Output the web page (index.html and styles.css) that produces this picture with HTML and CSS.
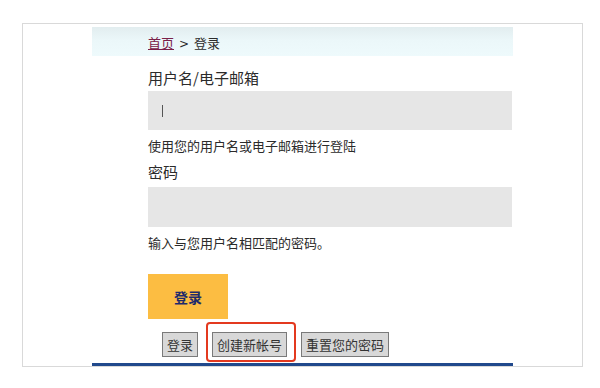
FILE: index.html
```html
<!DOCTYPE html>
<html lang="zh-CN">
<head>
    <meta charset="UTF-8">
    <meta name="viewport" content="width=device-width, initial-scale=1.0">
    <title>登录</title>
    <link rel="stylesheet" href="styles.css">
</head>
<body>
    <div class="frame">
        <div class="page">
            <!-- 面包屑 -->
            <div class="breadcrumb">
                <a href="#" class="crumb-link">首页</a><span class="crumb-sep">&gt;</span>登录
            </div>

            <div class="form">
                <label class="field-label">用户名/电子邮箱</label>
                <div class="field"><span class="caret"></span></div>
                <p class="help">使用您的用户名或电子邮箱进行登陆</p>

                <label class="field-label label-pass">密码</label>
                <div class="field field-pass"></div>
                <p class="help">输入与您用户名相匹配的密码。</p>

                <button class="submit-btn">登录</button>

                <div class="tabs">
                    <button class="tab-btn">登录</button>
                    <button class="tab-btn tab-marked">创建新帐号</button>
                    <button class="tab-btn">重置您的密码</button>
                </div>
            </div>

            <div class="footer-bar"></div>
        </div>
    </div>
</body>
</html>
```

FILE: styles.css
```css
* {
    margin: 0;
    padding: 0;
    box-sizing: border-box;
}

body {
    font-family: "Noto Sans CJK SC", "Liberation Sans", sans-serif;
    background: #fff;
    color: #2b2b2b;
}

.frame {
    margin: 23px 17px 0 22px;
    height: 344px;
    border: 1px solid #d9d9d9;
    overflow: hidden;
}

.page {
    width: 421px;
    margin-left: 69px;
    padding-top: 3px;
}

/* 面包屑 */
.breadcrumb {
    height: 29px;
    padding: 6px 0 0 56px;
    font-size: 13px;
    line-height: 20px;
    color: #2b2b2b;
    background: linear-gradient(180deg, #e2edef 0%, #ebf7f9 45%, #eefafc 100%);
}

.crumb-link {
    color: #7a2048;
    text-decoration: underline;
}

.crumb-sep {
    margin: 0 5px 0 5px;
    font-family: "DejaVu Sans", sans-serif;
    font-size: 12px;
}

.form {
    padding-left: 56px;
}

.field-label {
    display: block;
    margin-top: 11px;
    font-size: 15px;
    line-height: 22px;
}

.label-pass {
    margin-top: 6px;
}

.field {
    width: 364px;
    height: 39px;
    margin-top: 2px;
    background: #e6e6e6;
    padding: 14px 0 0 14px;
}

.field-pass {
    height: 40px;
    margin-top: 4px;
}

.caret {
    display: block;
    width: 1px;
    height: 12px;
    background: #555;
}

.help {
    margin-top: 7px;
    font-size: 13px;
    line-height: 18px;
}

.submit-btn {
    display: block;
    width: 80px;
    height: 45px;
    margin-top: 22px;
    border: none;
    background: #fcbd42;
    color: #1e2a6c;
    font-family: inherit;
    font-size: 14px;
    font-weight: bold;
}

.tabs {
    display: flex;
    gap: 14px;
    margin-top: 13px;
    padding-left: 14px;
}

.tab-btn {
    height: 25px;
    padding: 0 4px;
    border: 1px solid #7a7a7a;
    background: #d8d8d8;
    color: #333;
    font-family: inherit;
    font-size: 13px;
    line-height: 22px;
    position: relative;
}

/* 标注框 */
.tab-marked::after {
    content: "";
    position: absolute;
    left: -7px;
    top: -11px;
    right: -10px;
    bottom: -6px;
    border: 2px solid #e3391f;
    border-radius: 4px;
}

.footer-bar {
    height: 4px;
    margin-top: 6px;
    background: #21498c;
}
```
